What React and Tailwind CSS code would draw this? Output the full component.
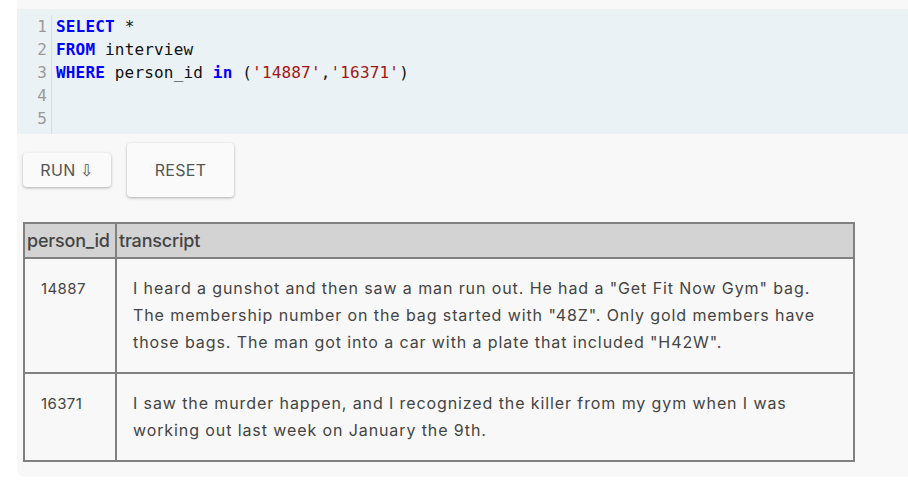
import React from "react";

const mono = { fontFamily: '"DejaVu Sans Mono", "Liberation Mono", monospace' };

function K({ children }) {
  return <span className="text-[#0000ff] font-bold">{children}</span>;
}
function S({ children }) {
  return <span className="text-[#a31515]">{children}</span>;
}

const rows = [
  {
    id: "14887",
    lines: [
      'I heard a gunshot and then saw a man run out. He had a "Get Fit Now Gym" bag.',
      'The membership number on the bag started with "48Z". Only gold members have',
      'those bags. The man got into a car with a plate that included "H42W".',
    ],
  },
  {
    id: "16371",
    lines: [
      "I saw the murder happen, and I recognized the killer from my gym when I was",
      "working out last week on January the 9th.",
    ],
  },
];

export default function App() {
  return (
    <div className="w-[908px] h-[492px] bg-white overflow-hidden" style={{ fontFamily: 'Inter, "Noto Sans", sans-serif' }}>
      <div className="ml-[17px] bg-[#f8f8f8] rounded-bl-lg pt-[9px] pb-[15px]">
        <div className="flex h-[125px] bg-[#eaf2f5] text-[16px] leading-[23px] pt-[6px]" style={mono}>
          <div className="w-[35px] border-r border-[#d8dde0] text-[#999] text-right pr-[4px]">
            <div>1</div>
            <div>2</div>
            <div>3</div>
            <div>4</div>
            <div>5</div>
          </div>
          <div className="pl-[4px] text-[#111] tracking-[0.17px] whitespace-pre">
            <div><K>SELECT</K> *</div>
            <div><K>FROM</K> interview</div>
            <div><K>WHERE</K> person_id <K>in</K> (<S>'14887'</S>,<S>'16371'</S>)</div>
            <div> </div>
            <div> </div>
          </div>
        </div>

        <div className="flex items-center gap-4 ml-[6px] mt-[9px]">
          <button className="w-[88px] h-[34px] bg-[#fafafa] rounded-[4px] shadow-[0_1px_3px_rgba(0,0,0,0.3)] text-[16px] tracking-[0.3px] text-[#555]">
            RUN ⇩
          </button>
          <button className="w-[107px] h-[54px] bg-[#fafafa] rounded-[4px] shadow-[0_1px_3px_rgba(0,0,0,0.3)] text-[16px] tracking-[0.3px] text-[#555]">
            RESET
          </button>
        </div>

        <table className="ml-[6px] mt-[25px] w-[832px] border-collapse text-[#444]">
          <thead>
            <tr className="bg-[#d3d3d3]">
              <th className="w-[92px] h-[35px] border-2 border-[#808080] px-[2px] text-left font-medium text-[18px] tracking-[-0.2px]">person_id</th>
              <th className="h-[35px] border-2 border-[#808080] px-[2px] text-left font-medium text-[18px] tracking-[-0.2px]">transcript</th>
            </tr>
          </thead>
          <tbody>
            {rows.map((r) => (
              <tr key={r.id}>
                <td className="border-2 border-[#808080] align-top px-4 py-4 text-[15px] leading-[27px] tracking-[0.4px]">{r.id}</td>
                <td className="border-2 border-[#808080] align-top px-4 py-4 text-[16px] leading-[27px] tracking-[0.9px] whitespace-nowrap">
                  {r.lines.map((l, i) => (
                    <div key={i}>{l}</div>
                  ))}
                </td>
              </tr>
            ))}
          </tbody>
        </table>
      </div>
    </div>
  );
}
